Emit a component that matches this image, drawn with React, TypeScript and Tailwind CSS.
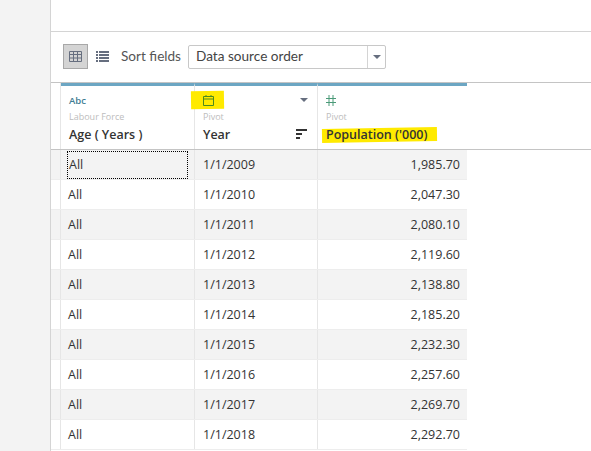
const rows = [
  ["1/1/2009", "1,985.70"],
  ["1/1/2010", "2,047.30"],
  ["1/1/2011", "2,080.10"],
  ["1/1/2012", "2,119.60"],
  ["1/1/2013", "2,138.80"],
  ["1/1/2014", "2,185.20"],
  ["1/1/2015", "2,232.30"],
  ["1/1/2016", "2,257.60"],
  ["1/1/2017", "2,269.70"],
  ["1/1/2018", "2,292.70"],
];

const App = () => {
  return (
    <div className="flex h-[451px] w-[591px] overflow-hidden bg-white font-['Open_Sans',sans-serif] text-[#333]">
      {/* Left rail */}
      <div className="w-[51px] shrink-0 border-r border-[#d4d4d4] bg-[#f3f3f3]" />

      <div className="flex min-w-0 flex-1 flex-col">
        <div className="h-[32px] shrink-0 border-b border-[#d4d4d4]" />

        {/* Toolbar */}
        <div className="flex h-[50px] shrink-0 items-center pl-[12px] pb-[1px] font-['Lato',sans-serif]">
          <div className="flex size-[25px] items-center justify-center border border-[#a8a8a8] bg-[#d4d4d4]">
            <svg width="13" height="11" viewBox="0 0 13 11" fill="none" stroke="#666e7f">
              <path d="M.5.5h12v10H.5zM.5 3.5h12M.5 7h12M4.5 .5v10M8.5 .5v10" />
            </svg>
          </div>
          <svg className="ml-[8px]" width="13" height="11" viewBox="0 0 13 11" fill="#666e7f">
            <path d="M0 0h2v2H0zM3 0h10v2H3zM0 3h2v2H0zM3 3h10v2H3zM0 6h2v2H0zM3 6h10v2H3zM0 9h2v2H0zM3 9h10v2H3z" />
          </svg>
          <span className="ml-[12px] w-[60px] text-[13.6px] whitespace-nowrap text-[#555]">Sort fields</span>
          <div className="ml-[7px] flex h-[24px] w-[198px] items-center rounded-[2px] border border-[#c8c8c8]">
            <span className="flex-1 pl-[7px] pb-[1px] text-[13.6px] text-[#444]">Data source order</span>
            <div className="flex h-full w-[18px] items-center justify-center border-l border-[#d4d4d4]">
              <div className="size-0 border-x-[4px] border-t-[4px] border-x-transparent border-t-[#666e7f]" />
            </div>
          </div>
        </div>

        {/* Table */}
        <div className="flex-1 border-t border-[#c4c4c4]">
          <div className="flex h-[67px] border-b border-[#c4c4c4]">
            <div className="w-[10px] shrink-0 border-r border-[#e6e6e6]" />
            <div className="w-[134px] border-t-[3px] border-r border-t-[#6ca6c3] border-r-[#e6e6e6] pl-[8px]">
              <div className="mt-[9px] text-[9.5px] leading-[12px] font-semibold text-[#3f7d93]">Abc</div>
              <div className="mt-[4px] text-[9px] leading-[12px] text-[#bdbdbd]">Labour Force</div>
              <div className="mt-[4px] text-[12.5px] leading-[16px] font-semibold text-[#333]">Age ( Years )</div>
            </div>
            <div className="relative w-[123px] border-t-[3px] border-r border-t-[#6ca6c3] border-r-[#e6e6e6] pl-[8px]">
              <div className="absolute -left-[4px] top-[5px] h-[18px] w-[33px] -rotate-1 bg-[#ffea00]" />
              <svg className="relative mt-[9px] block" width="11" height="11" viewBox="0 0 11 11" fill="none" stroke="#4c8a1e">
                <path d="M.5 1.5h10v9H.5zM.5 4h10M3 0v2M8 0v2" />
              </svg>
              <div className="mt-[5px] text-[9px] leading-[12px] text-[#bdbdbd]">Pivot</div>
              <div className="mt-[4px] text-[12.5px] leading-[16px] font-semibold text-[#333]">Year</div>
              <div className="absolute right-[9px] top-[12px] size-0 border-x-[4px] border-t-[4px] border-x-transparent border-t-[#666e7f]" />
              <svg className="absolute right-[10px] top-[43px]" width="11" height="10" viewBox="0 0 11 10" fill="#333">
                <path d="M0 0h11v2H0zM0 4h6v2H0zM0 8h4v2H0z" />
              </svg>
            </div>
            <div className="relative w-[149px] border-t-[3px] border-t-[#6ca6c3] pl-[8px]">
              <svg className="mt-[9px] block" width="10" height="11" viewBox="0 0 10 11" fill="none" stroke="#4a9a78">
                <path d="M3 0v11M7 0v11M0 3.5h10M0 7.5h10" />
              </svg>
              <div className="mt-[5px] text-[9px] leading-[12px] text-[#bdbdbd]">Pivot</div>
              <div className="absolute left-[4px] top-[42px] h-[14px] w-[115px] -rotate-1 bg-[#ffea00]" />
              <div className="relative mt-[4px] text-[12.5px] leading-[16px] font-semibold text-[#333]">Population ('000)</div>
            </div>
          </div>

          {rows.map(([year, value], i) => (
            <div
              key={year}
              className={`flex h-[30px] w-[416px] border-b border-[#ededed] text-[12.5px] text-[#333] ${i % 2 === 0 ? "bg-[#f3f3f3]" : "bg-white"}`}
            >
              <div className="w-[10px] shrink-0 border-r border-[#e6e6e6]" />
              <div className="flex w-[134px] items-center border-r border-[#e6e6e6] pt-[2px] pl-[7px]">
                {i === 0 ? (
                  <div className="-mt-[2px] -ml-[1px] flex h-[28px] w-[121px] items-center border border-dotted border-black pt-[2px] pl-[1px]">All</div>
                ) : (
                  "All"
                )}
              </div>
              <div className="flex w-[123px] items-center border-r border-[#e6e6e6] pt-[2px] pl-[8px]">{year}</div>
              <div className="flex flex-1 items-center justify-end pt-[2px] pr-[7px]">{value}</div>
            </div>
          ))}
        </div>
      </div>
    </div>
  );
};

export default App;
